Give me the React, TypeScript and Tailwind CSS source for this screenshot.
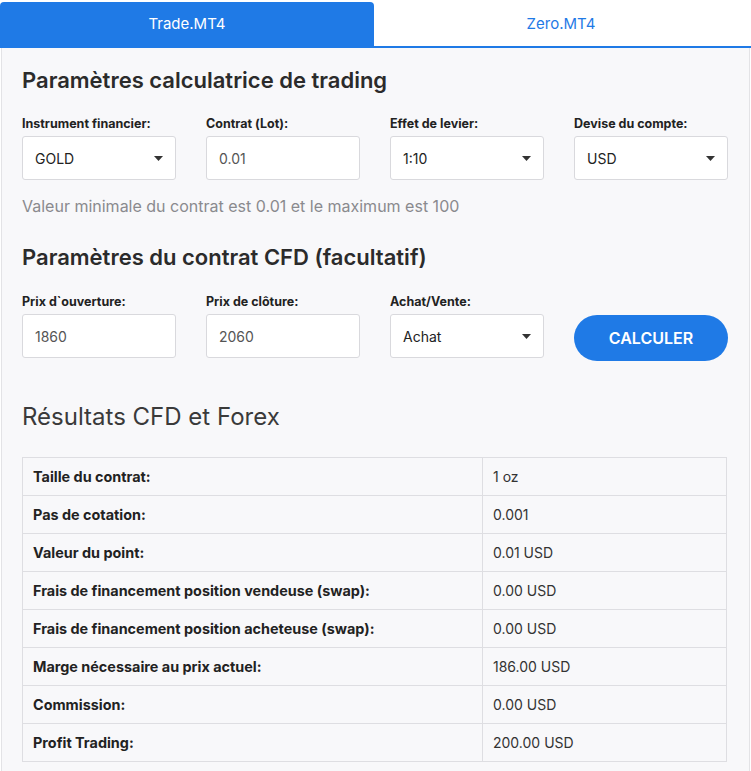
import { useState } from "react";

const rows: [string, string][] = [
  ["Taille du contrat:", "1 oz"],
  ["Pas de cotation:", "0.001"],
  ["Valeur du point:", "0.01 USD"],
  ["Frais de financement position vendeuse (swap):", "0.00 USD"],
  ["Frais de financement position acheteuse (swap):", "0.00 USD"],
  ["Marge nécessaire au prix actuel:", "186.00 USD"],
  ["Commission:", "0.00 USD"],
  ["Profit Trading:", "200.00 USD"],
];

function Caret() {
  return (
    <svg width="9" height="5" viewBox="0 0 9 5" className="shrink-0">
      <path d="M0 0h9L4.5 5z" fill="#333" />
    </svg>
  );
}

function Field({
  label,
  value,
  select,
}: {
  label: string;
  value: string;
  select?: boolean;
}) {
  return (
    <div className="w-[154px]">
      <div className="text-[12.5px] font-bold text-[#222] leading-4 mb-[4px]">
        {label}
      </div>
      <div className="h-[44px] bg-white border border-[#d9d9dd] rounded-[3px] flex items-center justify-between pl-[12px] pr-[12px] text-[14px]">
        <span className={select ? "text-[#222]" : "text-[#555]"}>{value}</span>
        {select && <Caret />}
      </div>
    </div>
  );
}

export default function App() {
  const [tab, setTab] = useState(0);

  return (
    <div
      className="w-[751px] bg-white"
      style={{ fontFamily: "Inter, 'Noto Sans', sans-serif" }}
    >
      {/* Onglets */}
      <div className="flex pt-[2px] border-b-2 border-[#1f7ae6]">
        {["Trade.MT4", "Zero.MT4"].map((t, i) => (
          <button
            key={t}
            onClick={() => setTab(i)}
            className={`w-[374px] h-[44px] text-[15px] rounded-t-[4px] ${
              tab === i ? "bg-[#1f7ae6] text-white" : "bg-white text-[#1f7ae6]"
            }`}
          >
            {t}
          </button>
        ))}
      </div>

      {/* Contenu */}
      <div className="bg-[#f8f8fa] border-x border-[#e3e3e6] mx-[1px] px-[20px] pt-[18px] pb-[10px]">
        <h2 className="text-[22px] font-semibold text-[#2b2b2b] leading-7">
          Paramètres calculatrice de trading
        </h2>

        <div className="flex gap-[30px] mt-[22px]">
          <Field label="Instrument financier:" value="GOLD" select />
          <Field label="Contrat (Lot):" value="0.01" />
          <Field label="Effet de levier:" value="1:10" select />
          <Field label="Devise du compte:" value="USD" select />
        </div>

        <p className="text-[16px] text-[#8a8a8e] mt-[16px] leading-5">
          Valeur minimale du contrat est 0.01 et le maximum est 100
        </p>

        <h2 className="text-[22px] font-semibold text-[#2b2b2b] leading-7 mt-[27px]">
          Paramètres du contrat CFD (facultatif)
        </h2>

        <div className="flex gap-[30px] mt-[23px] items-end">
          <Field label="Prix d`ouverture:" value="1860" />
          <Field label="Prix de clôture:" value="2060" />
          <Field label="Achat/Vente:" value="Achat" select />
          <button className="w-[154px] h-[46px] rounded-full bg-[#1f7ae6] text-white text-[16px] font-semibold mb-[-3px]">
            CALCULER
          </button>
        </div>

        <h2 className="text-[24px] font-normal text-[#3a3a3a] leading-8 mt-[43px]">
          Résultats CFD et Forex
        </h2>

        <table className="w-[705px] mt-[24px] border-collapse text-[14px]">
          <tbody>
            {rows.map(([k, v]) => (
              <tr key={k} className="h-[38px]">
                <td className="w-[460px] border border-[#dedee2] px-[10px] font-bold text-[14.4px] text-[#222]">
                  {k}
                </td>
                <td className="border border-[#dedee2] px-[10px] text-[#333]">
                  {v}
                </td>
              </tr>
            ))}
          </tbody>
        </table>
      </div>
    </div>
  );
}
